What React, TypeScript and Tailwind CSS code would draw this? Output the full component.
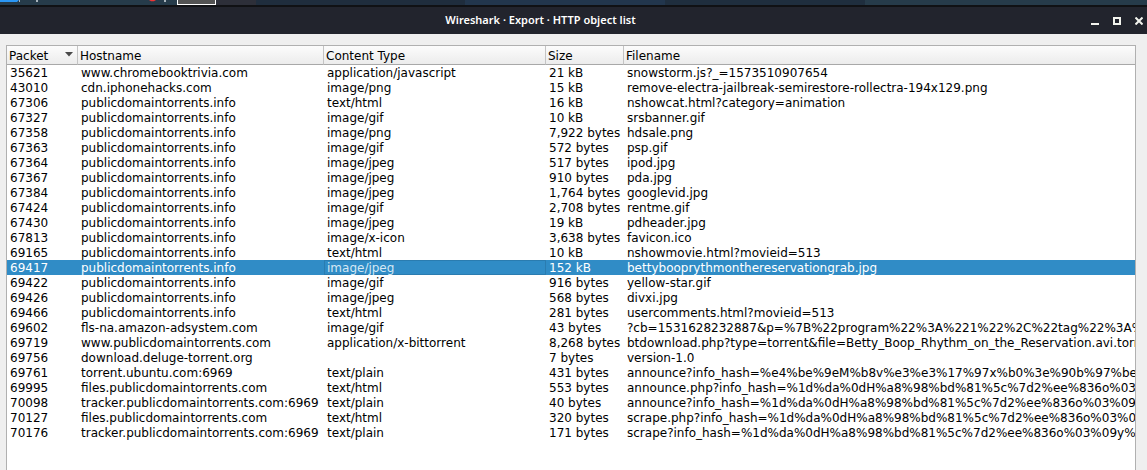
import React from "react";

type Row = [string, string, string, string, string];

const PDT = "publicdomaintorrents.info";
const HASH = "%1d%da%0dH%a8%98%bd%81%5c%7d2%ee%836o%03%09y%";

const rows: Row[] = [
  ["35621", "www.chromebooktrivia.com", "application/javascript", "21 kB", "snowstorm.js?_=1573510907654"],
  ["43010", "cdn.iphonehacks.com", "image/png", "15 kB", "remove-electra-jailbreak-semirestore-rollectra-194x129.png"],
  ["67306", PDT, "text/html", "16 kB", "nshowcat.html?category=animation"],
  ["67327", PDT, "image/gif", "10 kB", "srsbanner.gif"],
  ["67358", PDT, "image/png", "7,922 bytes", "hdsale.png"],
  ["67363", PDT, "image/gif", "572 bytes", "psp.gif"],
  ["67364", PDT, "image/jpeg", "517 bytes", "ipod.jpg"],
  ["67367", PDT, "image/jpeg", "910 bytes", "pda.jpg"],
  ["67384", PDT, "image/jpeg", "1,764 bytes", "googlevid.jpg"],
  ["67424", PDT, "image/gif", "2,708 bytes", "rentme.gif"],
  ["67430", PDT, "image/jpeg", "19 kB", "pdheader.jpg"],
  ["67813", PDT, "image/x-icon", "3,638 bytes", "favicon.ico"],
  ["69165", PDT, "text/html", "10 kB", "nshowmovie.html?movieid=513"],
  ["69417", PDT, "image/jpeg", "152 kB", "bettybooprythmonthereservationgrab.jpg"],
  ["69422", PDT, "image/gif", "916 bytes", "yellow-star.gif"],
  ["69426", PDT, "image/jpeg", "568 bytes", "divxi.jpg"],
  ["69466", PDT, "text/html", "281 bytes", "usercomments.html?movieid=513"],
  ["69602", "fls-na.amazon-adsystem.com", "image/gif", "43 bytes", "?cb=1531628232887&p=%7B%22program%22%3A%221%22%2C%22tag%22%3A%"],
  ["69719", "www.publicdomaintorrents.com", "application/x-bittorrent", "8,268 bytes", "btdownload.php?type=torrent&file=Betty_Boop_Rhythm_on_the_Reservation.avi.torrent"],
  ["69756", "download.deluge-torrent.org", "", "7 bytes", "version-1.0"],
  ["69761", "torrent.ubuntu.com:6969", "text/plain", "431 bytes", "announce?info_hash=%e4%be%9eM%b8v%e3%e3%17%97x%b0%3e%90b%97%be"],
  ["69995", "files.publicdomaintorrents.com", "text/html", "553 bytes", "announce.php?info_hash=" + HASH],
  ["70098", "tracker.publicdomaintorrents.com:6969", "text/plain", "40 bytes", "announce?info_hash=" + HASH],
  ["70127", "files.publicdomaintorrents.com", "text/html", "320 bytes", "scrape.php?info_hash=" + HASH],
  ["70176", "tracker.publicdomaintorrents.com:6969", "text/plain", "171 bytes", "scrape?info_hash=" + HASH],
];

const columns = ["Packet", "Hostname", "Content Type", "Size", "Filename"];
const SELECTED = "69417";

function Panel() {
  return (
    <div className="flex h-[5px] overflow-hidden bg-[#1f2f3f]">
      <div className="flex w-[177px] shrink-0 bg-[#263b4a]">
        <svg className="h-[5px] w-[177px]" viewBox="0 0 177 5" aria-hidden="true">
          <path d="M0 0h19l-2 2H0z" fill="#2b97f5" />
          <path d="M19 0h1v2h-1zM36 0h2v2h-2zM164 0h2v2h-2z" fill="#a9b4bc" />
          <path d="M149 0h7l-2 1.300h-3z" fill="#f03535" />
        </svg>
      </div>
      <div className="w-[39px] shrink-0 border border-t-0 border-white bg-[#535353]" />
      <div className="w-[40px] shrink-0 bg-[#2d2f39]" />
      <div className="w-[209px] shrink-0 bg-[#1f2d3d]" />
      <div className="w-[200px] shrink-0 bg-[#22364d]" />
      <div className="w-[200px] shrink-0 bg-[#1f2e3e]" />
      <div className="grow bg-[#263b4a]" />
    </div>
  );
}

function TitleBar() {
  return (
    <header className="grid h-[29px] grid-cols-[1fr_auto_1fr] items-center border-t-2 border-[#101114] bg-[#22242d] px-1">
      <h1 className="col-start-2 pr-[66px] font-['Noto_Sans',sans-serif] text-[11px] font-semibold whitespace-nowrap text-white">
        Wireshark · Export · HTTP object list
      </h1>
      <div className="flex justify-end gap-[14px] text-[#f3f4ee]">
        <button aria-label="Minimize" className="size-2">
          <svg viewBox="0 0 8 8" className="size-2" fill="currentColor"><path d="M0 6h8v2H0z" /></svg>
        </button>
        <button aria-label="Maximize" className="size-2">
          <svg viewBox="0 0 8 8" className="size-2" fill="none" stroke="currentColor" strokeWidth="2"><path d="M1 1h6v6H1z" /></svg>
        </button>
        <button aria-label="Close" className="size-2">
          <svg viewBox="0 0 8 8" className="size-2" stroke="currentColor" strokeWidth="2"><path d="M.5.5l7 7M7.500.5l-7 7" /></svg>
        </button>
      </div>
    </header>
  );
}

export default function App() {
  return (
    <div className="flex h-screen flex-col overflow-hidden bg-[#efefef] font-['DejaVu_Sans',sans-serif] text-xs text-black">
      <Panel />
      <TitleBar />
      <main className="flex min-h-0 grow pt-[11px] pr-[11px] pl-[6px]">
        <div className="min-w-0 grow overflow-hidden border border-b-0 border-[#b0b0b0] bg-white">
          <table className="w-full table-fixed border-separate border-spacing-0">
            <colgroup>
              <col className="w-[71px]" />
              <col className="w-[246px]" />
              <col className="w-[222px]" />
              <col className="w-[78px]" />
              <col />
            </colgroup>
            <thead>
              <tr className="h-[19px] bg-linear-to-b from-[#fcfcfc] to-[#ebebeb]">
                {columns.map((name, i) => (
                  <th
                    key={name}
                    scope="col"
                    aria-sort={i === 0 ? "ascending" : undefined}
                    className="border-r border-b border-r-[#c4c4c4] border-b-[#a8a8a8] p-0 text-left font-normal last:border-r-0"
                  >
                    <button className="flex w-full items-center justify-between pt-[2px] pr-1 pl-[2px] leading-[16px] whitespace-nowrap">
                      {name}
                      {i === 0 && (
                        <svg viewBox="0 0 8 5" className="mb-1 h-[5px] w-2" fill="#4a4a4a" aria-hidden="true">
                          <path d="M0 0h8L4 4.500z" />
                        </svg>
                      )}
                    </button>
                  </th>
                ))}
              </tr>
            </thead>
            <tbody>
              {rows.map((row) => {
                const selected = row[0] === SELECTED;
                return (
                  <tr key={row[0]} aria-selected={selected} className={selected ? "bg-[#308cc6] text-white" : ""}>
                    {row.map((cell, i) => (
                      <td
                        key={i}
                        className={
                          selected && i === 2
                            ? "h-[15px] overflow-hidden p-0 pt-[2px] pl-[3px] leading-[13px] whitespace-nowrap text-[#d5e8f4] inset-ring inset-ring-[#2a7cb0]"
                            : "h-[15px] overflow-hidden p-0 pt-[2px] pl-[3px] leading-[13px] whitespace-nowrap"
                        }
                      >
                        {cell}
                      </td>
                    ))}
                  </tr>
                );
              })}
            </tbody>
          </table>
        </div>
      </main>
    </div>
  );
}
